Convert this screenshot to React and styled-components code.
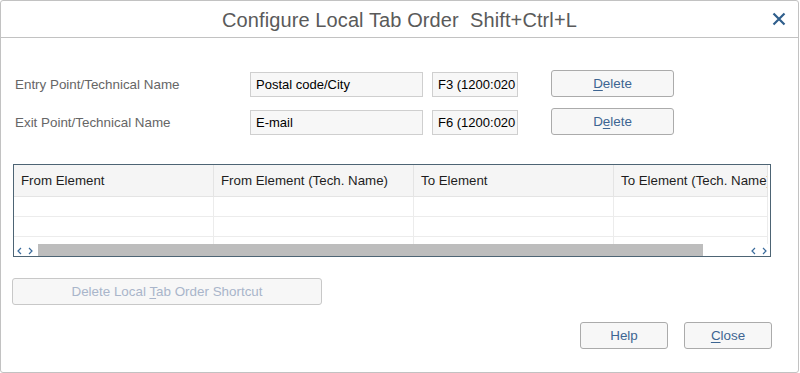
import React from "react";
import styled, { createGlobalStyle } from "styled-components";

const Global = createGlobalStyle`
  html, body {
    margin: 0;
    padding: 0;
    background: #fff;
  }
  body {
    font-family: "Liberation Sans", Arial, sans-serif;
  }
`;

const Dialog = styled.div`
  box-sizing: border-box;
  width: 799px;
  height: 373px;
  border: 1px solid #c2c2c2;
  border-radius: 3px;
  background: #fff;
  display: flex;
  flex-direction: column;
`;

const TitleBar = styled.div`
  height: 36px;
  border-bottom: 1px solid #c2c2c2;
  display: grid;
  grid-template-columns: 1fr auto 1fr;
  align-items: center;
`;

const Title = styled.div`
  grid-column: 2;
  font-size: 20px;
  color: #5a5a5a;
  letter-spacing: 0.1px;
  padding-top: 2px;
`;

const CloseX = styled.button`
  grid-column: 3;
  justify-self: end;
  margin-right: 11px;
  width: 16px;
  height: 16px;
  padding: 0;
  border: none;
  background: none;
  display: flex;
  align-items: center;
  justify-content: center;
  color: #2f5f8c;
`;

const Body = styled.div`
  flex: 1;
  display: flex;
  flex-direction: column;
  padding: 32px 0 0 11px;
`;

const Form = styled.div`
  display: flex;
  flex-direction: column;
  gap: 11px;
  padding-left: 3px;
`;

const Row = styled.div`
  display: flex;
  align-items: flex-end;
  height: 27px;
`;

const Label = styled.div`
  width: 235px;
  font-size: 13.4px;
  color: #666;
  align-self: center;
  padding-top: 1px;
`;

const Field = styled.div`
  box-sizing: border-box;
  width: ${(p) => p.$w}px;
  height: 25px;
  margin-right: ${(p) => p.$mr}px;
  border: 1px solid #cfcfcf;
  background: #f7f7f7;
  font-size: 13px;
  color: #000;
  padding: 0 5px;
  line-height: 23px;
  white-space: nowrap;
  overflow: hidden;
`;

const Button = styled.button`
  box-sizing: border-box;
  width: ${(p) => p.$w}px;
  height: 27px;
  border: 1px solid ${(p) => (p.disabled ? "#c8c8c8" : "#ababab")};
  border-radius: 3px;
  background: #f7f7f7;
  font-family: "Liberation Sans", Arial, sans-serif;
  font-size: 13.4px;
  color: ${(p) => (p.disabled ? "#a9b5ca" : "#3d6592")};
  padding: 0;
  cursor: default;

  u {
    text-decoration-thickness: 1px;
    text-underline-offset: 2px;
  }
`;

const Table = styled.div`
  box-sizing: border-box;
  margin-top: 29px;
  margin-left: 1px;
  width: 758px;
  height: 93px;
  border: 1px solid #4d6474;
  display: flex;
  flex-direction: column;
  overflow: hidden;
`;

const Cols = styled.div`
  display: grid;
  grid-template-columns: 200px 200px 200px 154px;
`;

const Head = styled.div`
  height: 31px;
  background: #f5f5f5;
  border-bottom: 1px solid #e4e4e4;
  border-right: 1px solid #e4e4e4;
  font-size: 13.3px;
  color: #1e1e1e;
  padding-left: 7px;
  line-height: 32px;
  white-space: nowrap;
  overflow: hidden;
`;

const Cell = styled.div`
  height: 19px;
  border-bottom: 1px solid #ececec;
  border-right: 1px solid #ececec;
`;

const ScrollBar = styled.div`
  height: 13px;
  margin-top: -13px;
  display: flex;
  align-items: center;
  background: #fff;
  position: relative;
`;

const Arrows = styled.div`
  display: flex;
  gap: 6px;
  padding: 0 ${(p) => p.$pr}px 0 ${(p) => p.$pl}px;
  color: #3a6b9c;
`;

const Thumb = styled.div`
  width: 665px;
  height: 13px;
  background: #bdbdbd;
  margin-left: 5px;
`;

const Spacer = styled.div`
  flex: 1;
`;

const Wide = styled.div`
  margin-top: 21px;
`;

const Footer = styled.div`
  display: flex;
  justify-content: flex-end;
  gap: 16px;
  margin-top: 17px;
  padding-right: 26px;
`;

const Chevron = ({ dir }) => (
  <svg width="5" height="8" viewBox="0 0 5 8">
    <path
      d={dir === "l" ? "M4 1 L1 4 L4 7" : "M1 1 L4 4 L1 7"}
      fill="none"
      stroke="currentColor"
      strokeWidth="1.2"
    />
  </svg>
);

const columns = [
  "From Element",
  "From Element (Tech. Name)",
  "To Element",
  "To Element (Tech. Name)",
];

export default function App() {
  return (
    <>
      <Global />
      <Dialog>
        <TitleBar>
          <Title>Configure Local Tab Order&nbsp; Shift+Ctrl+L</Title>
          <CloseX aria-label="Close">
            <svg width="14" height="14" viewBox="0 0 14 14">
              <path
                d="M1.5 1.5 L12.5 12.5 M12.5 1.5 L1.5 12.5"
                stroke="currentColor"
                strokeWidth="2.2"
              />
            </svg>
          </CloseX>
        </TitleBar>
        <Body>
          <Form>
            <Row>
              <Label>Entry Point/Technical Name</Label>
              <Field $w={173} $mr={9}>Postal code/City</Field>
              <Field $w={86} $mr={33}>F3 (1200:020</Field>
              <Button $w={123}>
                <u>D</u>elete
              </Button>
            </Row>
            <Row>
              <Label>Exit Point/Technical Name</Label>
              <Field $w={173} $mr={9}>E-mail</Field>
              <Field $w={86} $mr={33}>F6 (1200:020</Field>
              <Button $w={123}>
                D<u>e</u>lete
              </Button>
            </Row>
          </Form>
          <Table>
            <Cols>
              {columns.map((c) => (
                <Head key={c}>{c}</Head>
              ))}
              {[0, 1, 2].map((r) =>
                columns.map((c) => <Cell key={r + c} />)
              )}
            </Cols>
            <ScrollBar>
              <Arrows $pl={3} $pr={0}>
                <Chevron dir="l" />
                <Chevron dir="r" />
              </Arrows>
              <Thumb />
              <Spacer />
              <Arrows $pl={0} $pr={3}>
                <Chevron dir="l" />
                <Chevron dir="r" />
              </Arrows>
            </ScrollBar>
          </Table>
          <Wide>
            <Button $w={310} disabled>
              Delete Local <u>T</u>ab Order Shortcut
            </Button>
          </Wide>
          <Footer>
            <Button $w={88}>Help</Button>
            <Button $w={88}>
              <u>C</u>lose
            </Button>
          </Footer>
        </Body>
      </Dialog>
    </>
  );
}
